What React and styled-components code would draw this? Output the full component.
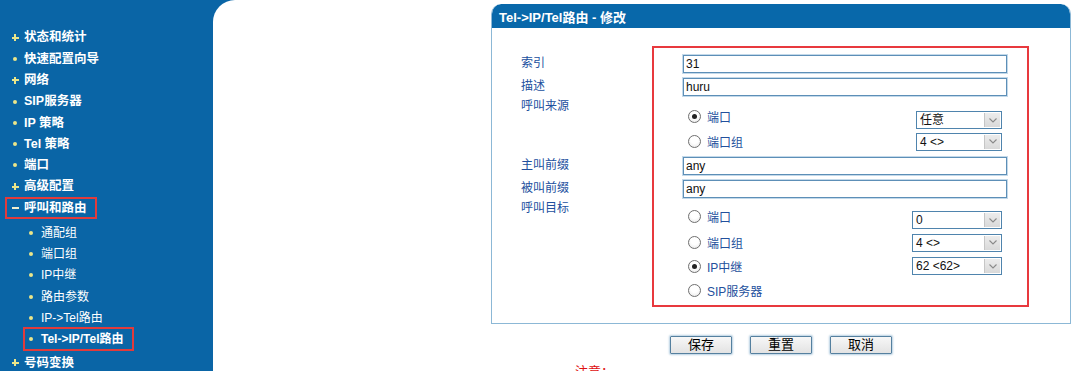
import React from "react";
import styled, { createGlobalStyle } from "styled-components";

const Global = createGlobalStyle`
  html, body { margin: 0; padding: 0; background: #ffffff; overflow: hidden; }
  body { font-family: "Liberation Sans", "Noto Sans CJK SC", sans-serif; }
  * { box-sizing: border-box; }
`;

const BLUE = "#0a65a6";
const BULLET = "#ebe68a";

const Page = styled.div`
  display: flex;
  width: 1080px;
  height: 371px;
  background: ${BLUE};
  overflow: hidden;
`;

const Sidebar = styled.nav`
  width: 213px;
  flex: none;
  padding-top: 27px;
  color: #ffffff;
`;

const MenuRow = styled.div`
  display: flex;
  align-items: center;
  height: ${(p) => (p.$sub ? "21.2px" : "21.3px")};
`;

const Mark = styled.div`
  display: inline-flex;
  align-items: center;
  height: ${(p) => (p.$sub ? "24px" : "22px")};
  margin-left: ${(p) => (p.$sub ? "23px" : "5px")};
  padding-left: ${(p) => (p.$sub ? "1px" : "3px")};
  padding-right: 8px;
  border: 2px solid ${(p) => (p.$marked ? "#e23b3b" : "transparent")};
`;

const BulletBox = styled.span`
  position: relative;
  width: 10px;
  height: 10px;
  flex: none;
  margin-right: ${(p) => (p.$sub ? "5px" : "4px")};
  display: inline-flex;
  align-items: center;
  justify-content: center;
`;

const Dot = styled.span`
  width: 4px;
  height: 4px;
  border-radius: 50%;
  background: ${BULLET};
`;

const Bar = styled.span`
  position: absolute;
  left: 1.5px;
  top: 4px;
  width: 7px;
  height: 2px;
  background: ${(p) => (p.$light ? "#f2efd0" : BULLET)};
`;

const VBar = styled.span`
  position: absolute;
  left: 4px;
  top: 1.5px;
  width: 2px;
  height: 7px;
  background: ${BULLET};
`;

const MenuText = styled.span`
  font-family: "Liberation Sans", "Noto Sans CJK SC", sans-serif;
  font-size: ${(p) => (p.$sub ? "12px" : "12.5px")};
  font-weight: ${(p) => (p.$bold ? 700 : 400)};
  color: #ffffff;
  white-space: nowrap;
  line-height: 1;
`;

const SubList = styled.div`
  padding: 3.7px 0 2.8px;
`;

const Bullet = ({ kind, sub }) => (
  <BulletBox $sub={sub}>
    {kind === "dot" && <Dot />}
    {kind === "plus" && (
      <>
        <Bar />
        <VBar />
      </>
    )}
    {kind === "minus" && <Bar $light />}
  </BulletBox>
);

const menu = [
  { t: "状态和统计", b: "plus" },
  { t: "快速配置向导", b: "dot" },
  { t: "网络", b: "plus" },
  { t: "SIP服务器", b: "dot" },
  { t: "IP 策略", b: "dot" },
  { t: "Tel 策略", b: "dot" },
  { t: "端口", b: "dot" },
  { t: "高级配置", b: "plus" },
  {
    t: "呼叫和路由",
    b: "minus",
    marked: true,
    children: [
      { t: "通配组" },
      { t: "端口组" },
      { t: "IP中继" },
      { t: "路由参数" },
      { t: "IP->Tel路由" },
      { t: "Tel->IP/Tel路由", marked: true },
    ],
  },
  { t: "号码变换", b: "plus" },
];

const Main = styled.main`
  flex: 1;
  background: #ffffff;
  border-top-left-radius: 22px;
  padding: 4px 0 0 278px;
`;

const Panel = styled.section`
  width: 580px;
  border: 1px solid #8cb8d6;
  border-top: none;
  border-radius: 10px 10px 0 0;
  overflow: hidden;
`;

const PanelHeader = styled.header`
  height: 24px;
  background: #0868aa;
  border-radius: 9px 9px 0 0;
  display: flex;
  align-items: center;
  padding-left: 7px;
  color: #ffffff;
  font-size: 13px;
  font-weight: 700;
`;

const PanelBody = styled.div`
  padding: 18px 0 16px 29px;
`;

const FormGrid = styled.div`
  display: grid;
  grid-template-columns: 131px 377px;
  grid-template-rows: 9px 23px 19px 58px 23px 20px 107px 2px;
`;

const Highlight = styled.div`
  grid-column: 2;
  grid-row: 1 / -1;
  border: 2px solid #e8393e;
`;

const Label = styled.div`
  grid-column: 1;
  grid-row: ${(p) => p.$row};
  align-self: start;
  margin-top: ${(p) => p.$mt || 0}px;
  line-height: ${(p) => p.$lh || 17}px;
  font-size: 12px;
  color: #21509e;
  white-space: nowrap;
`;

const Cell = styled.div`
  grid-column: 2;
  grid-row: ${(p) => p.$row};
  align-self: start;
  margin-left: 31px;
  margin-top: ${(p) => p.$mt || 0}px;
  padding-top: ${(p) => p.$pt || 0}px;
  width: 324px;
`;

const TextInput = styled.div`
  height: 18px;
  width: 324px;
  border: 1px solid #5d8fb7;
  box-shadow: 0 0 0 1px #c3d9ea;
  background: #ffffff;
  font-size: 12px;
  line-height: 16px;
  padding-left: 2px;
  color: #111111;
`;

const RadioRow = styled.div`
  display: flex;
  align-items: center;
  justify-content: space-between;
  width: 319px;
  height: ${(p) => p.$h}px;
  padding-left: 5px;
`;

const RadioLabel = styled.label`
  display: inline-flex;
  align-items: center;
  gap: 6px;
  margin-bottom: ${(p) => (p.$lift ? "8px" : "0")};
  font-size: 12px;
  color: #23509c;
  white-space: nowrap;
`;

const RadioCircle = styled.span`
  width: 13px;
  height: 13px;
  border-radius: 50%;
  border: 1px solid #6f6f6f;
  background: radial-gradient(circle at 50% 35%, #ffffff 40%, #e4e4e4 100%);
  display: inline-flex;
  align-items: center;
  justify-content: center;
  &::after {
    content: "";
    width: 5px;
    height: 5px;
    border-radius: 50%;
    background: ${(p) => (p.$checked ? "#222222" : "transparent")};
  }
`;

const SelectBox = styled.div`
  display: flex;
  align-items: stretch;
  width: ${(p) => p.$w}px;
  height: 18px;
  border: 1px solid #4f84ad;
  background: #ffffff;
`;

const SelectValue = styled.span`
  flex: 1;
  font-size: 12px;
  line-height: 16px;
  padding-left: 3px;
  color: #111111;
  white-space: nowrap;
`;

const SelectArrow = styled.span`
  width: 16px;
  margin: 1px;
  background: linear-gradient(#ececec, #d9d9d9);
  border-left: 1px solid #c6c6c6;
  display: flex;
  align-items: center;
  justify-content: center;
`;

const Select = ({ value, w }) => (
  <SelectBox $w={w}>
    <SelectValue>{value}</SelectValue>
    <SelectArrow>
      <svg width="8" height="5" viewBox="0 0 8 5">
        <polyline points="0.5,0.5 4,4 7.5,0.5" fill="none" stroke="#8a8a8a" strokeWidth="1.1" />
      </svg>
    </SelectArrow>
  </SelectBox>
);

const Radio = ({ label, checked, lift }) => (
  <RadioLabel $lift={lift}>
    <RadioCircle $checked={checked} />
    {label}
  </RadioLabel>
);

const ButtonRow = styled.div`
  width: 580px;
  display: flex;
  justify-content: center;
  gap: 18px;
  margin-top: 12px;
`;

const Button = styled.button`
  width: 62px;
  height: 18px;
  padding: 0;
  border: 1px solid #55809f;
  border-radius: 1px;
  background: linear-gradient(#f7f7f7, #e3e3e3);
  box-shadow: 0 0 2px 1px #b8d0e2;
  font-family: "Liberation Sans", "Noto Sans CJK SC", sans-serif;
  font-size: 13px;
  line-height: 16px;
  color: #000000;
`;

const Note = styled.div`
  margin: 10px 0 0 84px;
  font-size: 13px;
  line-height: 15px;
  color: #e01010;
`;

export default function App() {
  return (
    <>
      <Global />
      <Page>
        <Sidebar>
          {menu.map((m) => (
            <React.Fragment key={m.t}>
              <MenuRow>
                <Mark $marked={m.marked}>
                  <Bullet kind={m.b} />
                  <MenuText $bold>{m.t}</MenuText>
                </Mark>
              </MenuRow>
              {m.children && (
                <SubList>
                  {m.children.map((c) => (
                    <MenuRow $sub key={c.t}>
                      <Mark $sub $marked={c.marked}>
                        <Bullet kind="dot" sub />
                        <MenuText $sub $bold={c.marked}>
                          {c.t}
                        </MenuText>
                      </Mark>
                    </MenuRow>
                  ))}
                </SubList>
              )}
            </React.Fragment>
          ))}
        </Sidebar>
        <Main>
          <Panel>
            <PanelHeader>Tel-&gt;IP/Tel路由 - 修改</PanelHeader>
            <PanelBody>
              <FormGrid>
                <Highlight />
                <Label $row={2}>索引</Label>
                <Cell $row={2}>
                  <TextInput>31</TextInput>
                </Cell>
                <Label $row={3}>描述</Label>
                <Cell $row={3}>
                  <TextInput>huru</TextInput>
                </Cell>
                <Label $row={4} $lh={18}>呼叫来源</Label>
                <Cell $row={4} $pt={12}>
                  <RadioRow $h={22}>
                    <Radio label="端口" checked lift />
                    <Select value="任意" w={86} />
                  </RadioRow>
                  <RadioRow $h={21}>
                    <Radio label="端口组" />
                    <Select value="4 <>" w={86} />
                  </RadioRow>
                </Cell>
                <Label $row={5} $mt={2}>主叫前缀</Label>
                <Cell $row={5} $mt={2}>
                  <TextInput>any</TextInput>
                </Cell>
                <Label $row={6} $mt={2}>被叫前缀</Label>
                <Cell $row={6} $mt={2}>
                  <TextInput>any</TextInput>
                </Cell>
                <Label $row={7} $mt={1} $lh={18}>呼叫目标</Label>
                <Cell $row={7} $pt={11}>
                  <RadioRow $h={22}>
                    <Radio label="端口" lift />
                    <Select value="0" w={90} />
                  </RadioRow>
                  <RadioRow $h={23}>
                    <Radio label="端口组" />
                    <Select value="4 <>" w={90} />
                  </RadioRow>
                  <RadioRow $h={24}>
                    <Radio label="IP中继" checked />
                    <Select value="62 <62>" w={90} />
                  </RadioRow>
                  <RadioRow $h={24}>
                    <Radio label="SIP服务器" />
                  </RadioRow>
                </Cell>
              </FormGrid>
            </PanelBody>
          </Panel>
          <ButtonRow>
            <Button>保存</Button>
            <Button>重置</Button>
            <Button>取消</Button>
          </ButtonRow>
          <Note>注意：</Note>
        </Main>
      </Page>
    </>
  );
}
